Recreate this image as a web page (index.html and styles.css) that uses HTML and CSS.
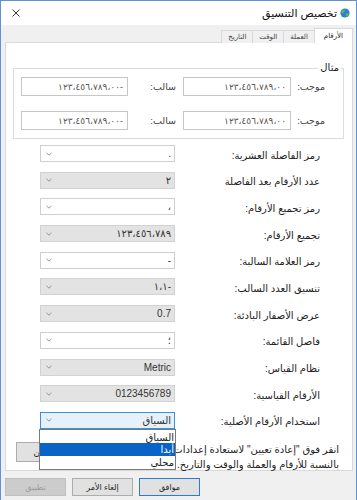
FILE: index.html
```html
<!DOCTYPE html>
<html lang="ar">
<head>
<meta charset="utf-8">
<title>تخصيص التنسيق</title>
<link rel="stylesheet" href="styles.css">
</head>
<body>
<div class="window" dir="rtl">
  <div class="titlebar">
    <svg class="app-icon" viewBox="0 0 10 10" aria-hidden="true">
      <circle cx="5" cy="5" r="4.6" fill="#2f7fd9"/>
      <path d="M2.2 2.4 C3.3 1.5 4.6 1.6 5.2 2.4 C5 3.4 4 3.6 3.6 4.6 C3.2 5.6 2.2 5.4 1.5 4.6 C1.3 3.8 1.6 3 2.2 2.4 Z" fill="#5cbf3a"/>
      <path d="M6 5.4 C7 5 8.2 5.3 8.8 6 C8.4 7.6 7.2 8.8 6.2 9 C5.9 8 6.4 7.4 5.8 6.6 Z" fill="#5cbf3a"/>
    </svg>
    <span class="title">تخصيص التنسيق</span>
    <svg class="close" viewBox="0 0 8 8" aria-hidden="true">
      <path d="M0.5 0.5 L7.5 7.5 M7.5 0.5 L0.5 7.5" stroke="#222" stroke-width="0.9" fill="none"/>
    </svg>
  </div>

  <div class="content">
    <div class="tabs">
      <div class="tab active">الأرقام</div>
      <div class="tab">العملة</div>
      <div class="tab">الوقت</div>
      <div class="tab">التاريخ</div>
    </div>

    <div class="panel">
      <fieldset class="example">
        <legend>مثال</legend>
        <div class="ex-grid">
          <span class="ex-label">موجب:</span>
          <div class="ex-box"><bdo dir="ltr">١٢٣،٤٥٦،٧٨٩،٠٠</bdo></div>
          <span class="ex-label ex-neg">سالب:</span>
          <div class="ex-box"><bdo dir="ltr">١٢٣،٤٥٦،٧٨٩،٠٠-</bdo></div>

          <span class="ex-label">موجب:</span>
          <div class="ex-box"><bdo dir="ltr">١٢٣،٤٥٦،٧٨٩،٠٠</bdo></div>
          <span class="ex-label ex-neg">سالب:</span>
          <div class="ex-box"><bdo dir="ltr">١٢٣،٤٥٦،٧٨٩،٠٠-</bdo></div>
        </div>
      </fieldset>

      <div class="settings">
        <span class="lbl">رمز الفاصلة العشرية:</span>
        <div class="combo"><span class="cv">.</span><svg class="chev" viewBox="0 0 6 4"><path d="M0.5 0.8 L3 3.2 L5.5 0.8"/></svg></div>

        <span class="lbl">عدد الأرقام بعد الفاصلة</span>
        <div class="combo gray"><span class="cv">٢</span><svg class="chev" viewBox="0 0 6 4"><path d="M0.5 0.8 L3 3.2 L5.5 0.8"/></svg></div>

        <span class="lbl">رمز تجميع الأرقام:</span>
        <div class="combo"><span class="cv">،</span><svg class="chev" viewBox="0 0 6 4"><path d="M0.5 0.8 L3 3.2 L5.5 0.8"/></svg></div>

        <span class="lbl">تجميع الأرقام:</span>
        <div class="combo gray"><span class="cv"><bdo dir="ltr">١٢٣،٤٥٦،٧٨٩</bdo></span><svg class="chev" viewBox="0 0 6 4"><path d="M0.5 0.8 L3 3.2 L5.5 0.8"/></svg></div>

        <span class="lbl">رمز العلامة السالبة:</span>
        <div class="combo"><span class="cv">-</span><svg class="chev" viewBox="0 0 6 4"><path d="M0.5 0.8 L3 3.2 L5.5 0.8"/></svg></div>

        <span class="lbl">تنسيق العدد السالب:</span>
        <div class="combo gray"><span class="cv"><bdo dir="ltr">١،١-</bdo></span><svg class="chev" viewBox="0 0 6 4"><path d="M0.5 0.8 L3 3.2 L5.5 0.8"/></svg></div>

        <span class="lbl">عرض الأصفار البادئة:</span>
        <div class="combo gray"><span class="cv"><bdo dir="ltr">0.7</bdo></span><svg class="chev" viewBox="0 0 6 4"><path d="M0.5 0.8 L3 3.2 L5.5 0.8"/></svg></div>

        <span class="lbl">فاصل القائمة:</span>
        <div class="combo"><span class="cv">؛</span><svg class="chev" viewBox="0 0 6 4"><path d="M0.5 0.8 L3 3.2 L5.5 0.8"/></svg></div>

        <span class="lbl">نظام القياس:</span>
        <div class="combo gray"><span class="cv">Metric</span><svg class="chev" viewBox="0 0 6 4"><path d="M0.5 0.8 L3 3.2 L5.5 0.8"/></svg></div>

        <span class="lbl">الأرقام القياسية:</span>
        <div class="combo gray"><span class="cv"><bdo dir="ltr">0123456789</bdo></span><svg class="chev" viewBox="0 0 6 4"><path d="M0.5 0.8 L3 3.2 L5.5 0.8"/></svg></div>

        <span class="lbl">استخدام الأرقام الأصلية:</span>
        <div class="combo focus"><span class="cv">السياق</span><svg class="chev" viewBox="0 0 6 4"><path d="M0.5 0.8 L3 3.2 L5.5 0.8"/></svg>
          <ul class="droplist">
            <li>السياق</li>
            <li class="sel">أبدا</li>
            <li>محلي</li>
          </ul>
        </div>
      </div>

      <div class="reset-area">
        <p class="reset-text">انقر فوق "إعادة تعيين" لاستعادة إعدادات<br>بالنسبة للأرقام والعملة والوقت والتاريخ.</p>
        <button class="btn reset-btn" type="button">إعادة تعيين</button>
      </div>
    </div>

    <div class="buttons">
      <button class="btn default" type="button">موافق</button>
      <button class="btn" type="button">إلغاء الأمر</button>
      <button class="btn disabled" type="button">تطبيق</button>
    </div>
  </div>
</div>
</body>
</html>
```
FILE: styles.css
```css
* { box-sizing: border-box; }

html, body {
  margin: 0;
  padding: 0;
}

body {
  width: 357px;
  height: 500px;
  overflow: hidden;
  background: #f0f0f0;
  font-family: "Liberation Sans", "DejaVu Sans", sans-serif;
  font-size: 10px;
  color: #1e1e1e;
}

.window {
  direction: rtl;
  width: 357px;
  height: 500px;
  border: 1px solid #5b93d9;
  border-bottom: none;
  background: #f0f0f0;
  display: flex;
  flex-direction: column;
}

/* ---------- title bar ---------- */
.titlebar {
  height: 24px;
  flex: 0 0 24px;
  background: #ffffff;
  display: flex;
  align-items: center;
  padding: 0 6px 0 11px;
}

.app-icon {
  width: 10px;
  height: 10px;
  margin-left: 3px;
  flex: 0 0 auto;
}

.title {
  font-size: 11px;
  color: #111;
}

.close {
  width: 8px;
  height: 8px;
  margin-right: auto;
}

/* ---------- content ---------- */
.content {
  flex: 1;
  padding: 3px 3px 0 4px;
  display: flex;
  flex-direction: column;
}

.tabs {
  display: flex;
  align-items: flex-end;
  height: 15px;
  margin-bottom: -1px;
  position: relative;
  z-index: 1;
}

.tab {
  height: 13px;
  padding: 0 6px;
  border: 1px solid #d9d9d9;
  border-bottom: none;
  margin-left: -1px;
  background: #f0f0f0;
  font-size: 7px;
  line-height: 12px;
  color: #444;
}

.tab.active {
  height: 15px;
  background: #ffffff;
  padding: 0 9px;
  line-height: 14px;
  color: #222;
}

.panel {
  height: 429px;
  background: #ffffff;
  border: 1px solid #d9d9d9;
  display: flex;
  flex-direction: column;
}

/* ---------- example group ---------- */
.example {
  margin: 19px 8px 0 7px;
  padding: 3px 0 8px 0;
  border: 1px solid #dcdcdc;
  min-inline-size: 0;
}

.example legend {
  padding: 0 2px;
  margin-right: 2px;
  font-size: 10px;
  line-height: 12px;
  color: #222;
}

.ex-grid {
  display: grid;
  grid-template-columns: 34px 108px 55px 107px;
  grid-auto-rows: 19px;
  row-gap: 15px;
  padding-right: 18px;
  align-items: center;
}

.ex-label {
  font-size: 9.5px;
  color: #444;
}

.ex-neg {
  padding-right: 7px;
}

.ex-box {
  height: 19px;
  border: 1px solid #c6c6c6;
  background: #fff;
  display: flex;
  align-items: center;
  padding: 0 4px;
  font-size: 9px;
  color: #555;
}

/* ---------- settings ---------- */
.settings {
  display: grid;
  grid-template-columns: 145px 135px;
  grid-auto-rows: 17px;
  row-gap: 9.7px;
  margin-top: 6px;
  padding-right: 32px;
  align-items: center;
}

.lbl {
  font-size: 10px;
  color: #222;
  padding-top: 3px;
}

.combo {
  position: relative;
  height: 17px;
  border: 1px solid #cfcfcf;
  background: #ffffff;
  display: flex;
  align-items: center;
  justify-content: space-between;
  padding: 0 3px 0 5px;
  font-size: 10px;
  color: #333;
}

.combo.gray {
  background: #e3e3e3;
  border-color: #d2d2d2;
}

.combo.focus {
  background: #e5f1fb;
  border-color: #3c8fdc;
}

.chev {
  width: 6px;
  height: 4px;
  fill: none;
  stroke: #8a8a8a;
  stroke-width: 0.9;
}

.droplist {
  position: absolute;
  top: 16px;
  left: -2px;
  width: 137px;
  margin: 0;
  padding: 1px 0;
  list-style: none;
  background: #ffffff;
  border: 1px solid #7a7a7a;
  z-index: 5;
}

.droplist li {
  height: 12.5px;
  line-height: 13px;
  padding-right: 1px;
  font-size: 10px;
  color: #222;
}

.droplist li.sel {
  background: #0a64c8;
  color: #ffffff;
}

/* ---------- reset area ---------- */
.reset-area {
  display: flex;
  align-items: flex-start;
  justify-content: space-between;
  margin-top: 13px;
  padding: 0 13px 0 10px;
}

.reset-text {
  margin: 0;
  flex: 1;
  white-space: nowrap;
  font-size: 10px;
  line-height: 15px;
  color: #222;
}

.btn {
  font-family: "Liberation Sans", "DejaVu Sans", sans-serif;
  font-size: 8px;
  color: #222;
  background: #e1e1e1;
  border: 1px solid #adadad;
  height: 18px;
  width: 61px;
  padding: 0;
}

.reset-btn {
  height: 20px;
  width: 76px;
  flex: 0 0 76px;
  font-size: 9px;
}

/* ---------- bottom buttons ---------- */
.buttons {
  display: flex;
  justify-content: flex-end;
  gap: 6px;
  margin-top: 7px;
}

.btn.default {
  border-color: #2b7bd6;
}

.btn.disabled {
  background: #cccccc;
  border-color: #bfbfbf;
  color: #9a9a9a;
}
```
